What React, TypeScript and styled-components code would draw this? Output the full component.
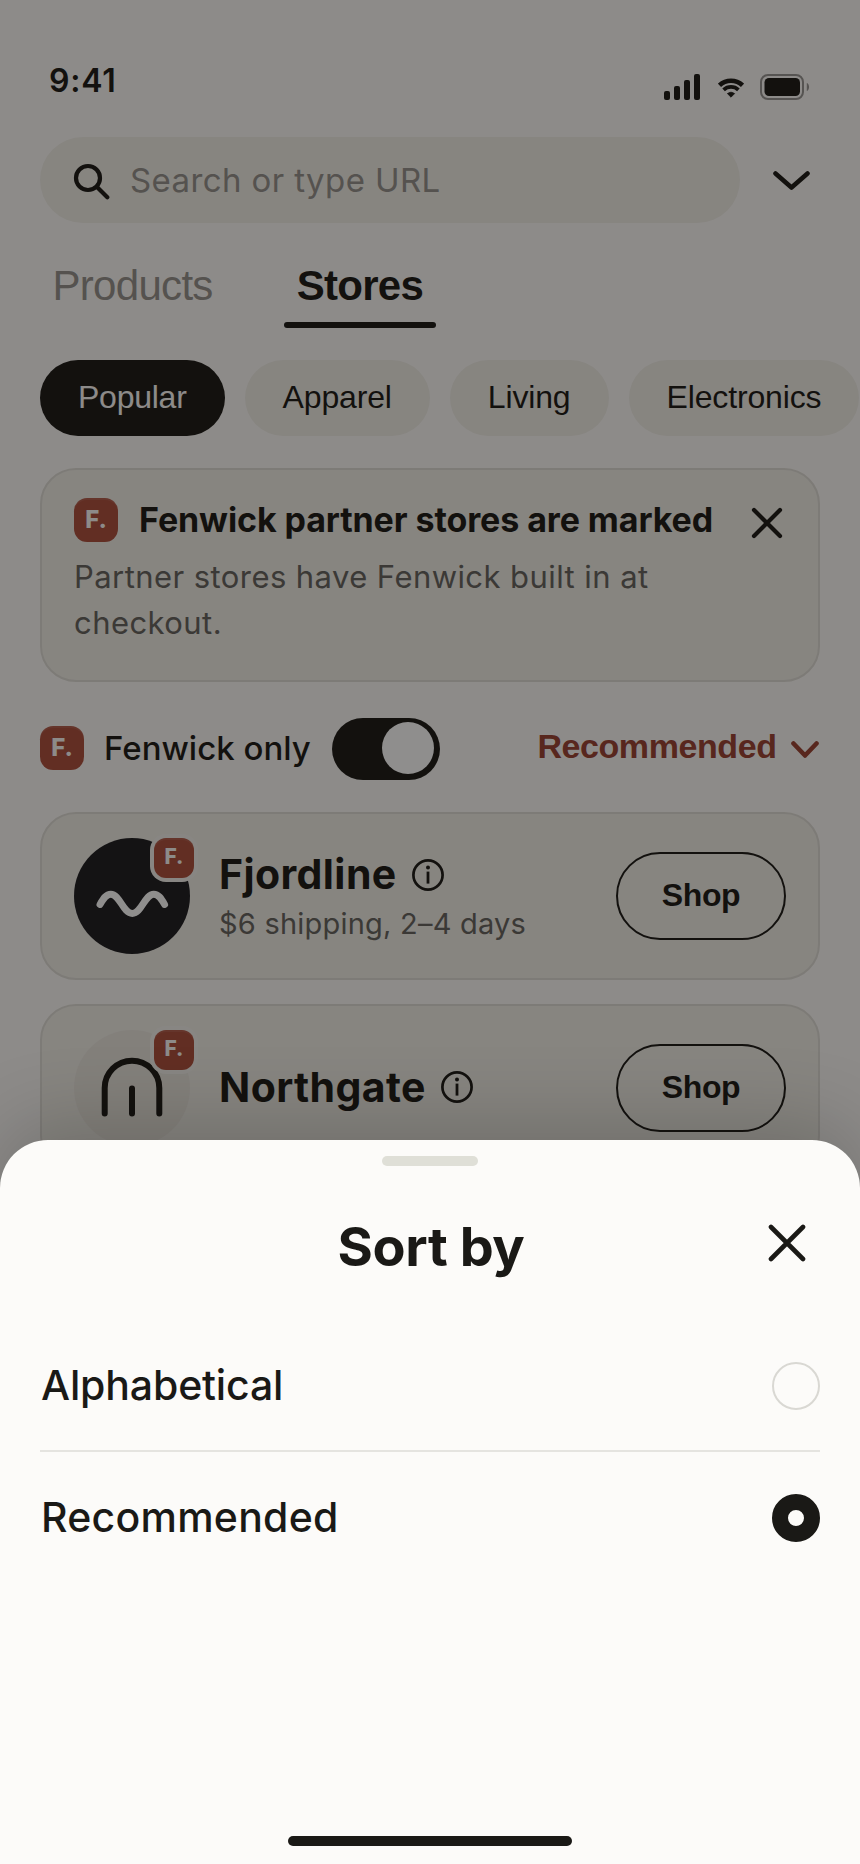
import React from "react";
import styled, { createGlobalStyle } from "styled-components";

const sans = `"Inter", "Liberation Sans", sans-serif`;
const control = `"Liberation Sans", Arial, sans-serif`;
const ink = "#1a1916";
const page = "#fcfaf8";
const card = "#f0eee8";
const line = "#dedcd6";
const accent = "#ac4e3c";

const GlobalStyle = createGlobalStyle`
  * { box-sizing: border-box; }
  body { margin: 0; background: ${page}; font-family: ${sans}; color: ${ink}; }
  button { margin: 0; padding: 0; border: 0; background: none; color: inherit; font-family: ${control}; }
  h1, h2, h3, p { margin: 0; }
  svg { display: block; flex: none; }
`;

const Screen = styled.main`
  position: relative;
  width: 860px;
  height: 1864px;
  overflow: hidden;
  background: ${page};
`;

const StatusBar = styled.header`
  display: flex;
  justify-content: space-between;
  height: 137px;
  padding: 61px 50px 0 49px;
`;

const Clock = styled.span`
  height: 40px;
  line-height: 40px;
  font-size: 32px;
  font-weight: 600;
  letter-spacing: 0.8px;
`;

const StatusIcons = styled.div`
  display: flex;
  align-items: flex-end;
  gap: 16px;
  height: 26px;
  margin-top: 13px;

  svg:first-child { margin-right: 2px; }
`;

const Content = styled.div`
  display: flex;
  flex-direction: column;
  padding: 0 40px;
`;

const SearchRow = styled.div`
  display: flex;
  align-items: center;
  gap: 33px;
`;

const SearchField = styled.div`
  display: flex;
  align-items: center;
  gap: 18px;
  width: 700px;
  height: 86px;
  padding-left: 32px;
  border-radius: 43px;
  background: ${card};
  color: #94918c;
  font-size: 33px;
  letter-spacing: 0.4px;
`;

const Tabs = styled.nav`
  display: flex;
  gap: 59px;
  margin-top: 34px;
`;

const Tab = styled.button<{ $active?: boolean }>`
  display: flex;
  flex-direction: column;
  gap: 7px;
  font-size: 42px;
  line-height: 58px;
  letter-spacing: -0.7px;
  font-weight: ${(p) => (p.$active ? 700 : 400)};
  color: ${(p) => (p.$active ? ink : "#94918c")};

  span { padding: 0 12.5px; }
  &::after {
    content: "";
    width: 100%;
    height: 6px;
    border-radius: 3px;
    background: ${(p) => (p.$active ? ink : "transparent")};
  }
`;

const Chips = styled.div`
  display: flex;
  gap: 20px;
  margin-top: 32px;
`;

const Chip = styled.button<{ $active?: boolean }>`
  flex: none;
  height: 76px;
  padding: 0 38px 2px;
  border-radius: 38px;
  background: ${(p) => (p.$active ? ink : card)};
  color: ${(p) => (p.$active ? page : ink)};
  font-size: 32px;
  letter-spacing: ${(p) => (p.$active ? -0.25 : -0.15)}px;
`;

const Notice = styled.section`
  height: 214px;
  margin-top: 32px;
  padding: 28px 32px;
  border: 2px solid ${line};
  border-radius: 36px;
  background: ${card};
`;

const NoticeHead = styled.div`
  display: flex;
  align-items: center;
  height: 44px;
`;

const NoticeTitle = styled.h2`
  flex: 1;
  margin-left: 21px;
  font-size: 34px;
  line-height: 44px;
  font-weight: 700;
  letter-spacing: -0.1px;
  white-space: nowrap;
`;

const DismissButton = styled.button`
  padding: 6px 3px 0 0;
`;

const NoticeText = styled.p`
  margin-top: 12px;
  font-size: 31px;
  line-height: 46px;
  letter-spacing: 0.43px;
  color: #65635e;
`;

const Badge = styled.span<{ $size: number; $lift?: number }>`
  display: flex;
  align-items: center;
  justify-content: center;
  flex: none;
  width: ${(p) => p.$size}px;
  height: ${(p) => p.$size}px;
  padding-bottom: ${(p) => p.$lift ?? 0}px;
  border-radius: ${(p) => p.$size * 0.3}px;
  background: ${accent};
  box-shadow: inset 0 2px 0 rgba(255, 255, 255, 0.08);
  color: #fcfaf8;
  font-size: ${(p) => (p.$size > 40 ? 24 : 21)}px;
  line-height: 1;
  font-weight: 800;
`;

const FilterRow = styled.div`
  display: flex;
  align-items: center;
  height: 62px;
  margin-top: 36px;
`;

const FilterMark = styled.div`
  display: flex;
  align-items: center;
  gap: 20px;
  padding-bottom: 2px;
  margin-right: 21px;
  font-size: 33px;
  font-weight: 500;
`;

const Toggle = styled.button`
  display: flex;
  justify-content: flex-end;
  width: 108px;
  height: 62px;
  padding: 4px 6px;
  border-radius: 31px;
  background: ${ink};
`;

const Knob = styled.span`
  width: 52px;
  height: 52px;
  border-radius: 50%;
  background: #fff;
`;

const SortButton = styled.button`
  display: flex;
  align-items: center;
  gap: 14.5px;
  margin-left: auto;
  padding: 0 1px 5px 0;
  color: #994232;
  font-size: 34px;
  font-weight: 700;
  letter-spacing: -0.42px;

  svg { margin-top: 5px; }
`;

const StoreList = styled.div`
  display: flex;
  flex-direction: column;
  gap: 24px;
  margin-top: 32px;
`;

const StoreCard = styled.article`
  display: flex;
  align-items: center;
  height: 168px;
  padding: 0 32px;
  border: 2px solid ${line};
  border-radius: 36px;
  background: ${card};
`;

const Avatar = styled.div<{ $bg: string }>`
  position: relative;
  width: 116px;
  height: 116px;
  border-radius: 50%;
  background: ${(p) => p.$bg};

  ${Badge} {
    position: absolute;
    top: 0;
    right: -4px;
    box-shadow: 0 0 0 4px #f3f1ec, inset 0 2px 0 rgba(255, 255, 255, 0.08);
  }
`;

const StoreInfo = styled.div<{ $stacked: boolean }>`
  flex: 1;
  margin-left: 29px;
  padding: ${(p) => (p.$stacked ? "3px 0 0" : "0 0 2px")};

  svg { margin-top: ${(p) => (p.$stacked ? 3 : 0)}px; }
`;

const StoreName = styled.h3`
  display: flex;
  align-items: center;
  gap: 15px;
  font-size: 41px;
  line-height: 50px;
  font-weight: 700;
  letter-spacing: 0.4px;
`;

const Shipping = styled.p`
  padding-top: 2px;
  font-size: 29px;
  line-height: 46px;
  letter-spacing: 0.22px;
  color: #65635e;
`;

const ShopButton = styled.button`
  width: 170px;
  height: 88px;
  padding-bottom: 2px;
  border: 2px solid ${ink};
  border-radius: 44px;
  font-size: 32px;
  font-weight: 700;
  letter-spacing: -0.4px;
`;

const Scrim = styled.div`
  position: absolute;
  inset: 0;
  background: rgba(10, 8, 7, 0.46);
`;

const Sheet = styled.section`
  position: absolute;
  left: 0;
  right: 0;
  bottom: 0;
  display: flex;
  flex-direction: column;
  align-items: center;
  height: 724px;
  padding: 16px 40px 18px;
  border-radius: 48px 48px 0 0;
  background: #fcfbf9;
  box-shadow: 0 -16px 80px rgba(0, 0, 0, 0.18);
`;

const Grabber = styled.span`
  width: 96px;
  height: 10px;
  border-radius: 5px;
  background: #dfdfd7;
`;

const SheetHead = styled.div`
  display: grid;
  grid-template-columns: 66px 1fr 66px;
  align-items: center;
  width: 100%;
  height: 80px;
  margin-top: 41px;
`;

const SheetTitle = styled.h1`
  padding-left: 2px;
  font-size: 54px;
  line-height: 80px;
  font-weight: 700;
  letter-spacing: -0.4px;
  text-align: center;
`;

const CloseButton = styled.button`
  display: flex;
  justify-content: center;
  padding-bottom: 8px;
`;

const Options = styled.div`
  width: 100%;
  margin-top: 33px;
`;

const Option = styled.div<{ $divided?: boolean }>`
  display: flex;
  align-items: center;
  justify-content: space-between;
  height: 132px;
  font-size: 41px;
  font-weight: 500;
  box-shadow: ${(p) => (p.$divided ? "inset 0 -2px 0 #e5e4e0" : "none")};
`;

const OptionLabel = styled.span<{ $checked?: boolean }>`
  padding: 0 0 2px 1px;
  letter-spacing: ${(p) => (p.$checked ? 0.25 : -0.15)}px;
`;

const Radio = styled.span<{ $checked?: boolean }>`
  width: 48px;
  height: 48px;
  border: ${(p) => (p.$checked ? `16px solid ${ink}` : "2px solid #d9d8d3")};
  border-radius: 50%;
`;

const HomeBar = styled.span`
  width: 284px;
  height: 10px;
  margin-top: auto;
  border-radius: 5px;
  background: ${ink};
`;

const Signal = () => (
  <svg width="36" height="26" viewBox="0 0 36 26" fill={ink}>
    <rect x="0" y="17" width="6" height="9" rx="2" />
    <rect x="10" y="12" width="6" height="14" rx="2" />
    <rect x="20" y="6" width="6" height="20" rx="2" />
    <rect x="30" y="0" width="6" height="26" rx="2" />
  </svg>
);

const Wifi = () => (
  <svg width="26" height="22" viewBox="0 0 26 22">
    <g fill="none" stroke={ink}>
      <path d="M1.5 7.3a16.9 16.9 0 0 1 23 0" strokeWidth="4.6" />
      <path d="M5.6 11.9a10.8 10.8 0 0 1 14.8 0" strokeWidth="3.8" />
    </g>
    <path
      d="M9.4 15.6a5.7 5.7 0 0 1 7.2 0L13 19.2z"
      fill={ink}
      stroke={ink}
      strokeWidth="0.8"
      strokeLinejoin="round"
    />
  </svg>
);

const Battery = () => (
  <svg width="50" height="26" viewBox="0 0 50 26">
    <rect x="1" y="1" width="42" height="24" rx="7" fill="none" stroke={ink} strokeOpacity="0.45" strokeWidth="2" />
    <rect x="4.5" y="4" width="35.5" height="18" rx="4.5" fill={ink} />
    <path d="M46.8 9c3 1 3 7 0 8z" fill={ink} fillOpacity="0.45" />
  </svg>
);

const SearchIcon = () => (
  <svg width="40" height="40" viewBox="0 0 40 40" fill="none" stroke={ink} strokeWidth="4.2" strokeLinecap="round">
    <circle cx="16" cy="18" r="12" />
    <path d="M25 27l10.3 10.3" />
  </svg>
);

const Chevron = ({ w, h, stroke }: { w: number; h: number; stroke: number }) => (
  <svg width={w + 5} height={h + 5} fill="none" stroke="currentColor" strokeWidth={stroke} strokeLinecap="round" strokeLinejoin="round">
    <path d={`M2.5 2.5l${w / 2} ${h}l${w / 2} ${-h}`} />
  </svg>
);

const Cross = ({ size, stroke }: { size: number; stroke: number }) => (
  <svg width={size + 6} height={size + 6} fill="none" stroke={ink} strokeWidth={stroke} strokeLinecap="round">
    <path d={`M3 3l${size} ${size}M${size + 3} 3l${-size} ${size}`} />
  </svg>
);

const InfoIcon = () => (
  <svg width="32" height="32" viewBox="0 0 32 32" fill="none" stroke={ink}>
    <circle cx="16" cy="16" r="14.6" strokeWidth="2.7" />
    <path d="M16 12.6v12" strokeWidth="2.8" />
    <circle cx="16" cy="8.6" r="2" fill={ink} stroke="none" />
  </svg>
);

const WaveLogo = () => (
  <svg width="116" height="116" viewBox="0 0 116 116" fill="none" stroke="#fff" strokeWidth="6.9" strokeLinecap="round">
    <path d="M26 66.4C29.6 60.2 32.2 56.2 36.8 56.2C45.8 56.2 49 75.5 58.3 75.5C67.6 75.5 70.8 56.2 79.8 56.2C84.4 56.2 87 60.2 90.6 66.4" />
  </svg>
);

const ArchLogo = () => (
  <svg width="116" height="116" viewBox="0 0 116 116" fill="none" stroke={ink} strokeWidth="6" strokeLinecap="round">
    <path d="M30.7 83.4V58a27.3 27.3 0 0 1 54.6 0V83.4M58 58.5V83.4" />
  </svg>
);

const stores = [
  { name: "Fjordline", shipping: "$6 shipping, 2–4 days", bg: "#1c1c20", logo: <WaveLogo /> },
  { name: "Northgate", shipping: "", bg: "#e9e5de", logo: <ArchLogo /> },
];

export default function App() {
  return (
    <>
      <GlobalStyle />
      <Screen>
        <StatusBar>
          <Clock>9:41</Clock>
          <StatusIcons>
            <Signal />
            <Wifi />
            <Battery />
          </StatusIcons>
        </StatusBar>
        <Content>
          <SearchRow>
            <SearchField>
              <SearchIcon />
              Search or type URL
            </SearchField>
            <Chevron w={32} h={14} stroke={4.6} />
          </SearchRow>
          <Tabs>
            <Tab><span>Products</span></Tab>
            <Tab $active><span>Stores</span></Tab>
          </Tabs>
          <Chips>
            <Chip $active>Popular</Chip>
            <Chip>Apparel</Chip>
            <Chip>Living</Chip>
            <Chip>Electronics</Chip>
          </Chips>
          <Notice>
            <NoticeHead>
              <Badge $size={44}>F.</Badge>
              <NoticeTitle>Fenwick partner stores are marked</NoticeTitle>
              <DismissButton><Cross size={26} stroke={4.2} /></DismissButton>
            </NoticeHead>
            <NoticeText>Partner stores have Fenwick built in at<br />checkout.</NoticeText>
          </Notice>
          <FilterRow>
            <FilterMark>
              <Badge $size={44}>F.</Badge>
              Fenwick only
            </FilterMark>
            <Toggle><Knob /></Toggle>
            <SortButton>
              Recommended
              <Chevron w={23} h={12} stroke={4.6} />
            </SortButton>
          </FilterRow>
          <StoreList>
            {stores.map((s) => (
              <StoreCard key={s.name}>
                <Avatar $bg={s.bg}>
                  {s.logo}
                  <Badge $size={40} $lift={3}>F.</Badge>
                </Avatar>
                <StoreInfo $stacked={s.shipping !== ""}>
                  <StoreName>{s.name}<InfoIcon /></StoreName>
                  {s.shipping && <Shipping>{s.shipping}</Shipping>}
                </StoreInfo>
                <ShopButton>Shop</ShopButton>
              </StoreCard>
            ))}
          </StoreList>
        </Content>
        <Scrim />
        <Sheet>
          <Grabber />
          <SheetHead>
            <span />
            <SheetTitle>Sort by</SheetTitle>
            <CloseButton><Cross size={32} stroke={4.6} /></CloseButton>
          </SheetHead>
          <Options>
            <Option $divided><OptionLabel>Alphabetical</OptionLabel><Radio /></Option>
            <Option><OptionLabel $checked>Recommended</OptionLabel><Radio $checked /></Option>
          </Options>
          <HomeBar />
        </Sheet>
      </Screen>
    </>
  );
}
